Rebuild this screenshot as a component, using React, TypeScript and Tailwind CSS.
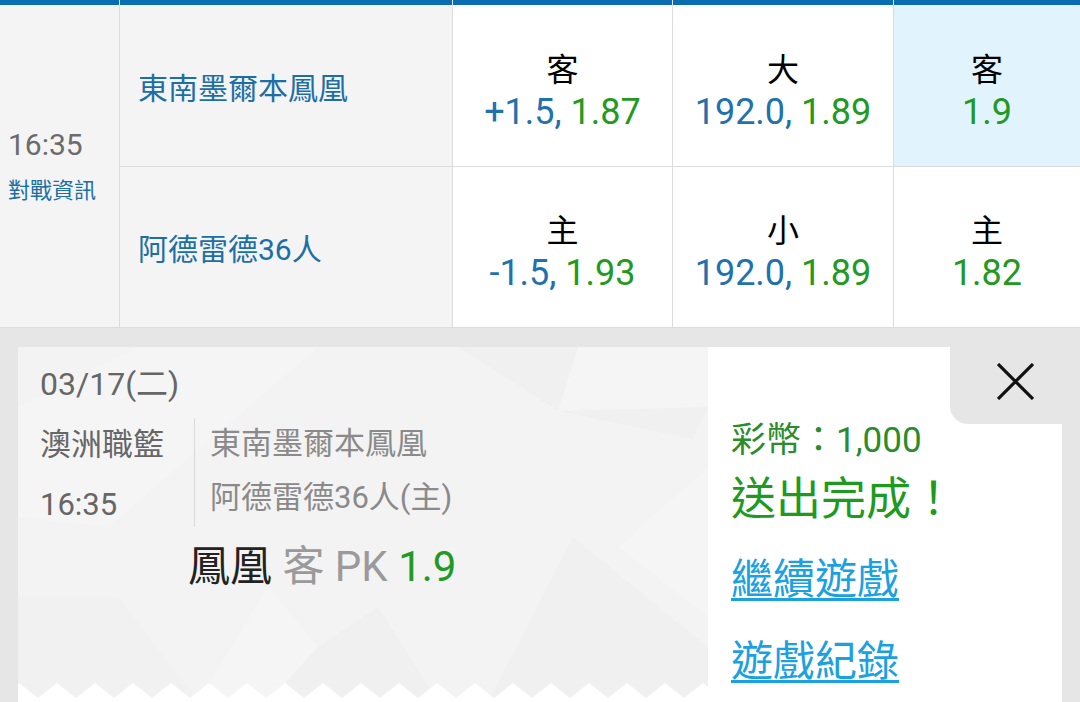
import clsx from "clsx";

const ff = "font-[family-name:Roboto,'Noto_Sans_CJK_TC',sans-serif]";

// zigzag edge at the bottom of the ticket
const teeth = (() => {
    const pts: string[] = ["0,19", "0,1"];
    for (let k = 0; k < 19; k++) {
        pts.push(`${1 + 38 * k},0`);
        pts.push(`${20 + 38 * k},15`);
    }
    pts.push("690,4", "690,19");
    return pts.join(" ");
})();

interface OddsProps {
    label: string;
    line?: string;
    price: string;
    hi?: boolean;
}

const Odds: React.FC<OddsProps> = ({ label, line, price, hi }) => (
    <div
        className={clsx(
            "flex flex-col items-center justify-center pt-[12px]",
            hi ? "bg-[#e1f3fc]" : "bg-white"
        )}
    >
        <span className="text-[32px] leading-[40px] text-black">{label}</span>
        <span className="text-[36px] leading-[44px]">
            {line && <span className="text-[#1f72ad]">{line}, </span>}
            <span className="text-[#229a22]">{price}</span>
        </span>
    </div>
);

const Pattern = () => (
    <svg
        width="690"
        height="355"
        viewBox="0 0 690 355"
        className="col-start-1 row-start-1"
    >
        <rect width="690" height="355" fill="#f3f3f3" />
        <polygon points="440,0 540,64 675,92 690,60 690,0" fill="#f0f0f0" />
        <polygon points="540,64 560,0 690,0 690,60" fill="#f5f5f5" />
        <polygon points="0,60 120,0 300,0 90,180 0,170" fill="#f5f5f5" />
        <polygon points="555,190 470,355 690,355 690,300" fill="#f0f0f0" />
        <polygon points="0,250 100,250 180,355 0,355" fill="#f1f1f1" />
        <polygon points="300,300 360,260 420,355 250,355" fill="#f0f0f0" />
        <polygon points="600,200 690,120 690,270" fill="#f5f5f5" />
        <polygon points="180,355 250,240 300,300 250,355" fill="#f5f5f5" />
    </svg>
);

export default function App() {
    return (
        <div
            className={clsx(
                "w-[1080px] h-[702px] overflow-hidden bg-[#e6e6e6] flex flex-col",
                ff
            )}
        >
            <div className="grid grid-cols-[119px_332px_219px_220px_186px] gap-x-px bg-[#dfe9f0] h-[6px]">
                <div className="bg-[#0b6db1]" />
                <div className="bg-[#0b6db1]" />
                <div className="bg-[#0b6db1]" />
                <div className="bg-[#0b6db1]" />
                <div className="bg-[#0b6db1]" />
            </div>

            <div className="grid grid-cols-[119px_332px_219px_220px_186px] grid-rows-[161px_160px] gap-px bg-[#dcdcdc]">
                <div className="row-span-2 bg-[#f4f4f4] flex flex-col justify-center pl-2">
                    <span className="text-[30px] leading-[36px] text-[#6b6b6b]">16:35</span>
                    <span className="text-[22px] leading-[30px] mt-[13px] text-[#1b6ea6]">
                        對戰資訊
                    </span>
                </div>
                <div className="bg-[#f4f4f4] flex items-center pl-[18px] pt-[6px] text-[30px] text-[#1e6ea6]">
                    東南墨爾本鳳凰
                </div>
                <Odds label="客" line="+1.5" price="1.87" />
                <Odds label="大" line="192.0" price="1.89" />
                <Odds label="客" price="1.9" hi />
                <div className="bg-[#f4f4f4] flex items-center pl-[18px] pt-[4px] text-[30px] text-[#1e6ea6]">
                    阿德雷德36人
                </div>
                <Odds label="主" line="-1.5" price="1.93" />
                <Odds label="小" line="192.0" price="1.89" />
                <Odds label="主" price="1.82" />
            </div>

            <div className="flex-1 pt-[19px] px-[18px] border-t border-[#dcdcdc]">
                <div className="flex h-full bg-white">
                    <div className="grid w-[690px] h-[355px]">
                        <Pattern />
                        <div className="col-start-1 row-start-1 flex flex-col pt-[19px] pl-[22px]">
                            <span className="text-[32px] leading-[36px] text-[#666]">03/17(二)</span>
                            <div className="flex mt-[16px]">
                                <div className="w-[154px] flex flex-col pt-[9px] text-[31px] leading-[36px] text-[#666]">
                                    <span>澳洲職籃</span>
                                    <span className="mt-[24px]">16:35</span>
                                </div>
                                <div className="border-l border-[#d9d9d9] flex flex-col pl-[15px] pt-[8px] pb-[11px] text-[31px] leading-[36px] text-[#8a8a8a]">
                                    <span>東南墨爾本鳳凰</span>
                                    <span className="mt-[18px]">阿德雷德36人(主)</span>
                                </div>
                            </div>
                            <div className="ml-[148px] mt-[16px] text-[42px] leading-[48px]">
                                <span className="text-[#222]">鳳凰</span>
                                <span className="text-[#9a9a9a]"> 客 PK </span>
                                <span className="text-[#229a22]">1.9</span>
                            </div>
                        </div>
                        <svg
                            width="690"
                            height="19"
                            viewBox="0 0 690 19"
                            className="col-start-1 row-start-1 self-end"
                        >
                            <polygon points={teeth} fill="#ffffff" />
                        </svg>
                    </div>

                    <div className="relative flex-1 flex flex-col pl-[23px] pt-[74px]">
                        <button className="absolute right-0 top-0 w-[112px] h-[77px] bg-[#e6e6e6] rounded-bl-[18px] pl-[47px] pt-[16px] flex items-start">
                            <svg width="37" height="37" viewBox="0 0 37 37">
                                <path
                                    d="M1 1 L36 36 M36 1 L1 36"
                                    stroke="#111"
                                    strokeWidth="3.2"
                                    fill="none"
                                />
                            </svg>
                        </button>
                        <span className="text-[35px] leading-[40px] text-[#2a8c2a]">彩幣：1,000</span>
                        <span className="mt-[12px] text-[45px] leading-[54px] text-[#1e9a1e]">
                            送出完成！
                        </span>
                        <a className="mt-[28px] text-[42px] leading-[50px] text-[#1ba1e2] underline decoration-[3px] underline-offset-[4px]">
                            繼續遊戲
                        </a>
                        <a className="mt-[32px] text-[42px] leading-[50px] text-[#1ba1e2] underline decoration-[3px] underline-offset-[4px]">
                            遊戲紀錄
                        </a>
                    </div>
                </div>
            </div>
        </div>
    );
}
